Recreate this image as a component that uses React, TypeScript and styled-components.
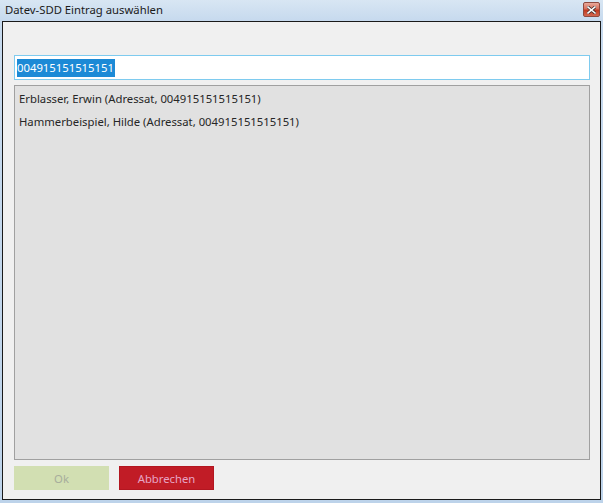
import React from "react";
import styled, { createGlobalStyle } from "styled-components";

const Global = createGlobalStyle`
  html, body { margin: 0; padding: 0; background: #c9dcef; }
  body { font-family: "Noto Sans", "Open Sans", sans-serif; }
  * { box-sizing: border-box; }
`;

const Frame = styled.div`
  width: 603px;
  height: 503px;
  display: flex;
  flex-direction: column;
  background: linear-gradient(to bottom, #d8e6f3 0px, #c7daee 20px, #bdd3ea 100%);
  padding: 0 2px 3px 2px;
`;

const TitleBar = styled.div`
  height: 21px;
  display: flex;
  align-items: center;
  justify-content: space-between;
  padding: 0 1px 0 3px;
`;

const Title = styled.div`
  font-size: 11.3px;
  color: #1b1b1b;
  line-height: 20px;
  margin-top: -2px;
`;

const CloseButton = styled.div`
  width: 17px;
  height: 15px;
  margin-top: -2px;
  border: 1px solid #8e4a3f;
  border-radius: 2px;
  background: linear-gradient(to bottom, #e9a99a 0%, #d7705d 45%, #c0391f 55%, #d2664f 100%);
  display: flex;
  align-items: center;
  justify-content: center;
`;

const Client = styled.div`
  flex: 1;
  border: 1px solid #1a1a1a;
  background: #f0f0f0;
  display: flex;
  flex-direction: column;
  padding: 33px 10px 9px 11px;
`;

const SearchBox = styled.div`
  height: 25px;
  border: 1px solid #7ecbef;
  background: #ffffff;
  display: flex;
  align-items: center;
  padding: 0 0 0 2px;
`;

const Selected = styled.span`
  background: #1c8ad6;
  color: #ffffff;
  font-size: 11.3px;
  line-height: 18px;
  padding: 0 1px 0 0;
`;

const List = styled.div`
  margin-top: 5px;
  height: 375px;
  border: 1px solid #a0a0a0;
  background: #e1e1e1;
  padding: 1px 0 0 4px;
  display: flex;
  flex-direction: column;
`;

const Item = styled.div`
  height: 23px;
  line-height: 23px;
  font-size: 11.3px;
  color: #262626;
`;

const Buttons = styled.div`
  margin-top: 6px;
  display: flex;
  gap: 10px;
`;

const Button = styled.div<{ $variant: "ok" | "cancel" }>`
  width: 95px;
  height: 24px;
  display: flex;
  align-items: center;
  justify-content: center;
  font-size: 11.3px;
  background: ${(p) => (p.$variant === "ok" ? "#d2dfb2" : "#c11c26")};
  color: ${(p) => (p.$variant === "ok" ? "#a7ad9c" : "#e6a4c4")};
  border: 1px solid ${(p) => (p.$variant === "ok" ? "#d2dfb2" : "#b31620")};
`;

export default function App() {
  return (
    <>
      <Global />
      <Frame>
        <TitleBar>
          <Title>Datev-SDD Eintrag auswählen</Title>
          <CloseButton>
            <svg width="9" height="8" viewBox="0 0 9 8">
              <path d="M1 1 L8 7 M8 1 L1 7" stroke="#3a2a2a" strokeWidth="3" strokeLinecap="square" />
              <path d="M1 1 L8 7 M8 1 L1 7" stroke="#ffffff" strokeWidth="1.6" strokeLinecap="square" />
            </svg>
          </CloseButton>
        </TitleBar>
        <Client>
          <SearchBox>
            <Selected>004915151515151</Selected>
          </SearchBox>
          <List>
            <Item>Erblasser, Erwin (Adressat, 004915151515151)</Item>
            <Item>Hammerbeispiel, Hilde (Adressat, 004915151515151)</Item>
          </List>
          <Buttons>
            <Button $variant="ok">Ok</Button>
            <Button $variant="cancel">Abbrechen</Button>
          </Buttons>
        </Client>
      </Frame>
    </>
  );
}
